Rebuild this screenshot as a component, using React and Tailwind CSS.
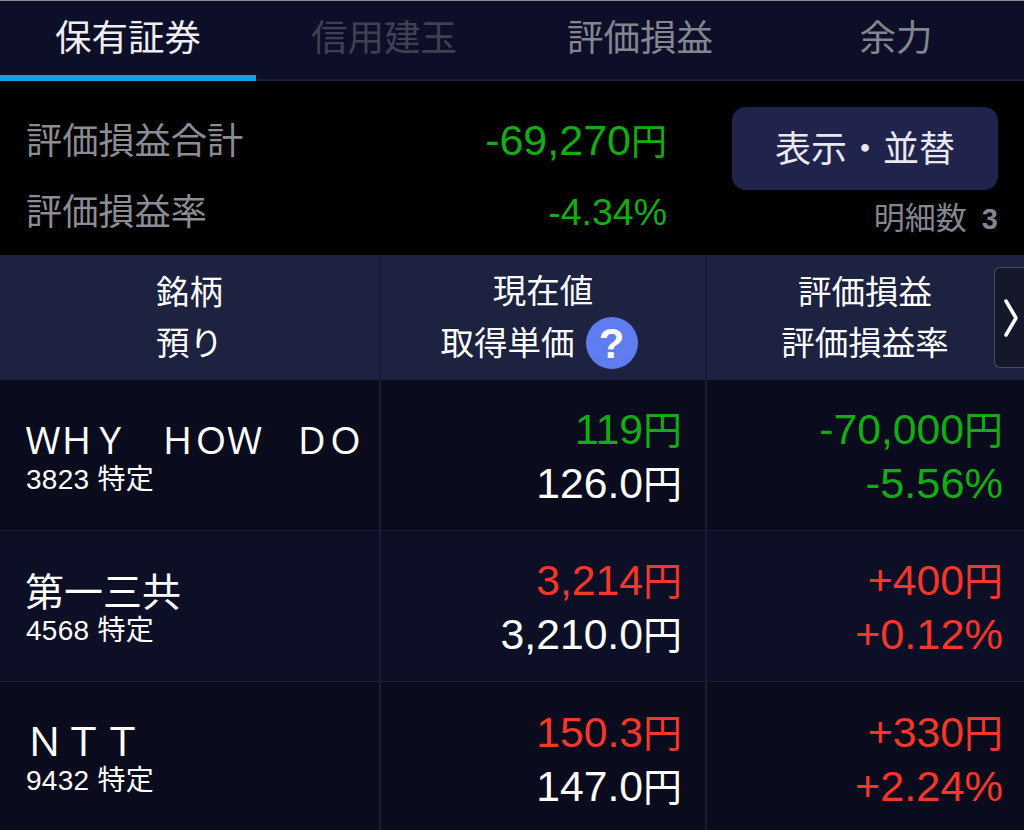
const JP = "font-['Liberation_Sans','Noto_Sans_CJK_JP',sans-serif]";

const GREEN = 'text-[#11ad13]';
const RED = 'text-[#f5362a]';

const tabs = [
  { label: '保有証券', cls: 'text-[#eeeef2]', active: true },
  { label: '信用建玉', cls: 'text-[#3f4152]' },
  { label: '評価損益', cls: 'text-[#85858f]' },
  { label: '余力', cls: 'text-[#85858f]' },
];

const rows = [
  {
    name: 'ＷＨＹ　ＨＯＷ　ＤＯ',
    nameCls: 'text-[36px] tracking-[-2.4px]',
    sub: '3823 特定',
    price: '119',
    cost: '126.0',
    pl: '-70,000',
    rate: '-5.56%',
    color: GREEN,
    bg: 'bg-[#0a0b1c]',
    height: 'h-[151px]',
    pad: 'pt-[2px]',
  },
  {
    name: '第一三共',
    nameCls: 'text-[39px]',
    sub: '4568 特定',
    price: '3,214',
    cost: '3,210.0',
    pl: '+400',
    rate: '+0.12%',
    color: RED,
    bg: 'bg-[#0d0f26]',
    height: 'h-[151px]',
    pad: 'pt-[1px]',
  },
  {
    name: 'ＮＴＴ',
    nameCls: 'text-[39px]',
    sub: '9432 特定',
    price: '150.3',
    cost: '147.0',
    pl: '+330',
    rate: '+2.24%',
    color: RED,
    bg: 'bg-[#0a0b1c]',
    height: 'h-[148px]',
    pad: 'pt-[5px]',
  },
];

// digits are drawn larger than the 円 next to them
function Yen({ value, digits, yen, line }) {
  return (
    <div className={`flex items-baseline justify-end whitespace-nowrap ${line}`}>
      <span className={digits}>{value}</span>
      <span className={yen}>円</span>
    </div>
  );
}

function Row({ row }) {
  return (
    <div className={`flex ${row.height} ${row.bg} border-b border-[#1a1c36] last:border-b-0`}>
      <div className="flex w-[379px] flex-col justify-center pt-[6px] pl-[25px] text-white">
        <div className={`whitespace-nowrap leading-[44px] ${row.nameCls}`}>{row.name}</div>
        <div className="ml-px text-[28px] leading-[32px] tracking-[0.3px]">{row.sub}</div>
      </div>
      <div className={`flex w-[328px] flex-col items-end justify-center border-x-2 border-[#1a1c36] pr-[23px] ${row.pad}`}>
        <div className={row.color}>
          <Yen value={row.price} digits="text-[42.7px] leading-[54px]" yen="text-[39px] leading-[54px]" line="h-[54px]" />
        </div>
        <div className="text-white">
          <Yen value={row.cost} digits="text-[42.7px] leading-[54px]" yen="text-[39px] leading-[54px]" line="h-[54px]" />
        </div>
      </div>
      <div className={`flex flex-1 flex-col items-end justify-center pr-[21px] ${row.color} ${row.pad}`}>
        <Yen value={row.pl} digits="text-[42.7px] leading-[54px]" yen="text-[39px] leading-[54px]" line="h-[54px]" />
        <div className="h-[54px] text-[43.3px] leading-[54px]">{row.rate}</div>
      </div>
    </div>
  );
}

export default function App() {
  return (
    <div className={`h-[830px] w-[1024px] overflow-hidden bg-black ${JP}`}>
      {/* Tabs */}
      <div className="flex h-[81px] border-t border-[#8d8d99] border-b-2 border-b-[#1c1e36] bg-[#0d0f28]">
        {tabs.map((tab) => (
          <div key={tab.label} className={`relative flex w-[256px] items-center justify-center pb-[1px] text-[36.5px] ${tab.cls}`}>
            {tab.label}
            {tab.active && <div className="absolute -bottom-[2px] left-0 h-[6px] w-full bg-[#1a9fe3]" />}
          </div>
        ))}
      </div>

      {/* Summary */}
      <div className="flex h-[174px] bg-black">
        <div className="flex w-[667px] flex-col pl-[26px] pt-[26px] text-[36.2px]">
          <div className="flex h-[70px] justify-between leading-[70px]">
            <span className="text-[#8c8c94]">評価損益合計</span>
            <span className={`-mt-[2px] ${GREEN}`}>
              <Yen value="-69,270" digits="text-[43px] leading-[70px]" yen="text-[36px] leading-[70px]" line="h-[70px]" />
            </span>
          </div>
          <div className="flex h-[70px] justify-between pt-[1px] leading-[70px]">
            <span className="text-[#8c8c94]">評価損益率</span>
            <span className={`-mt-[1px] text-[37.5px] ${GREEN}`}>-4.34%</span>
          </div>
        </div>
        <div className="ml-[65px] flex w-[266px] flex-col pt-[26px]">
          <button className="flex h-[83px] w-full items-center justify-center rounded-[14px] bg-[#20234c] pt-[2px] text-[36px] text-[#e8e8ee]">
            表示・並替
          </button>
          <div className="mt-[9px] flex items-center justify-end text-[31px] leading-[40px] text-[#85858f]">
            明細数<span className="ml-[15px] text-[29px] font-bold">3</span>
          </div>
        </div>
      </div>

      {/* Table header */}
      <div className="relative flex h-[125px] bg-[#1d2240] text-[33.5px] leading-[51px] text-white">
        <div className="flex w-[379px] flex-col items-center justify-center">
          <div>銘柄</div>
          <div>預り</div>
        </div>
        <div className="flex w-[328px] flex-col items-center justify-center border-x-2 border-[#171a35]">
          <div>現在値</div>
          <div className="flex items-center pr-[8px]">
            取得単価
            <span className="ml-[11px] flex h-[52px] w-[52px] items-center justify-center rounded-full bg-[#5f7cf0] text-[42px] font-bold">?</span>
          </div>
        </div>
        <div className="flex flex-1 flex-col items-center justify-center pr-[1px]">
          <div>評価損益</div>
          <div>評価損益率</div>
        </div>
        <div className="absolute right-0 top-[12px] flex h-[101px] w-[30px] items-center rounded-l-[6px] border border-r-0 border-[#4a4d60] bg-[#15172a] pl-[8px]">
          <svg width="16" height="40" viewBox="0 0 16 40" fill="none" stroke="white" strokeWidth="3.5" strokeLinecap="round" strokeLinejoin="round">
            <path d="M3 3 L13 20 L3 37" />
          </svg>
        </div>
      </div>

      {/* Rows */}
      {rows.map((row) => (
        <Row key={row.sub} row={row} />
      ))}
    </div>
  );
}
